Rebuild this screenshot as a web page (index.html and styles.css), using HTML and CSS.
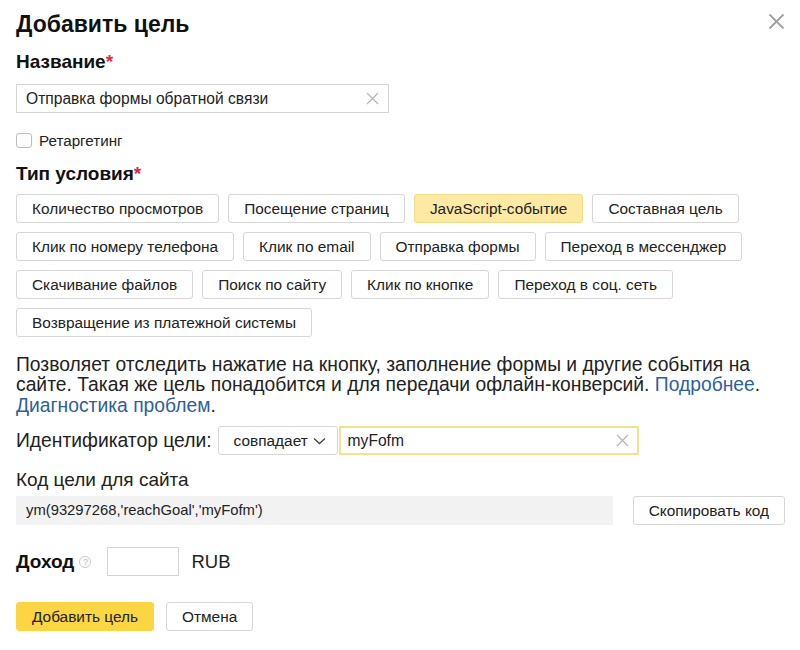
FILE: index.html
```html
<!DOCTYPE html>
<html lang="ru">
<head>
<meta charset="utf-8">
<title>Добавить цель</title>
<link rel="stylesheet" href="styles.css">
</head>
<body>
<div class="dialog">
  <div class="head">
    <h1 class="title">Добавить цель</h1>
    <button class="close" aria-label="Закрыть">
      <svg width="17" height="17" viewBox="0 0 17 17"><path d="M1.5 1.5L15.5 15.5M15.5 1.5L1.5 15.5" stroke="#a0a0a0" stroke-width="1.8" fill="none"/></svg>
    </button>
  </div>

  <h2 class="label name-label">Название<span class="req">*</span></h2>
  <div class="input name-input">
    <span class="input-text">Отправка формы обратной связи</span>
    <svg class="clear" width="13" height="13" viewBox="0 0 13 13"><path d="M1 1L12 12M12 1L1 12" stroke="#b5b5b5" stroke-width="1.2" fill="none"/></svg>
  </div>

  <label class="check">
    <span class="box"></span>
    <span>Ретаргетинг</span>
  </label>

  <h2 class="label type-label">Тип условия<span class="req">*</span></h2>
  <div class="types">
    <button class="tbtn">Количество просмотров</button>
    <button class="tbtn">Посещение страниц</button>
    <button class="tbtn active">JavaScript-событие</button>
    <button class="tbtn">Составная цель</button>
    <button class="tbtn">Клик по номеру телефона</button>
    <button class="tbtn">Клик по email</button>
    <button class="tbtn">Отправка формы</button>
    <button class="tbtn">Переход в мессенджер</button>
    <button class="tbtn">Скачивание файлов</button>
    <button class="tbtn">Поиск по сайту</button>
    <button class="tbtn">Клик по кнопке</button>
    <button class="tbtn">Переход в соц. сеть</button>
    <button class="tbtn">Возвращение из платежной системы</button>
  </div>

  <p class="desc">Позволяет отследить нажатие на кнопку, заполнение формы и другие события на сайте. Такая же цель понадобится и для передачи офлайн-конверсий. <a href="#">Подробнее</a>. <a href="#">Диагностика проблем</a>.</p>

  <div class="ident">
    <span class="ident-label">Идентификатор цели:</span>
    <button class="select">совпадает
      <svg width="13" height="8" viewBox="0 0 13 8"><path d="M1 1.5L6.5 6.5L12 1.5" stroke="#444" stroke-width="1.3" fill="none"/></svg>
    </button>
    <div class="input focus-input">
      <span class="input-text">myFofm</span>
      <svg class="clear" width="13" height="13" viewBox="0 0 13 13"><path d="M1 1L12 12M12 1L1 12" stroke="#b5b5b5" stroke-width="1.2" fill="none"/></svg>
    </div>
  </div>

  <div class="code-label">Код цели для сайта</div>
  <div class="code-row">
    <div class="code">ym(93297268,'reachGoal','myFofm')</div>
    <button class="btn copy">Скопировать код</button>
  </div>

  <div class="income">
    <span class="income-label">Доход</span>
    <span class="help">?</span>
    <div class="input small-input"></div>
    <span class="cur">RUB</span>
  </div>

  <div class="actions">
    <button class="btn primary">Добавить цель</button>
    <button class="btn">Отмена</button>
  </div>
</div>
</body>
</html>
```

FILE: styles.css
```css
* { box-sizing: border-box; }
html, body { margin: 0; background: #fff; }
body {
  font-family: "Liberation Sans", Arial, sans-serif;
  color: #222;
  padding: 0 15px 0 16px;
}
button { font-family: inherit; }
.dialog { width: 769px; }
.head {
  display: flex;
  justify-content: space-between;
  align-items: flex-start;
  height: 38px;
}
.title {
  margin: 0;
  padding-top: 10px;
  font-size: 23px;
  line-height: 28px;
  font-weight: bold;
  color: #111;
}
.close {
  border: 0;
  background: none;
  padding: 0;
  margin: 13px 0 0 0;
  width: 17px;
  height: 17px;
}
.label {
  margin: 0;
  font-size: 19px;
  line-height: 22px;
  font-weight: bold;
  color: #111;
}
.name-label { margin-top: 13px; }
.req { color: #e0283e; }
.input {
  display: flex;
  align-items: center;
  justify-content: space-between;
  height: 29px;
  border: 1px solid #d4d4d4;
  padding: 0 9px 0 9px;
  font-size: 15.6px;
  color: #222;
  background: #fff;
}
.name-input { width: 373px; margin-top: 11px; }
.check {
  display: flex;
  align-items: center;
  gap: 7px;
  height: 18px;
  margin-top: 18px;
  font-size: 15.2px;
  color: #222;
}
.box {
  width: 16px;
  height: 15px;
  border: 1px solid #bdbdbd;
  border-radius: 3px;
  background: #fff;
}
.type-label { margin-top: 14px; }
.types {
  display: flex;
  flex-wrap: wrap;
  gap: 9px;
  margin-top: 9px;
}
.tbtn, .btn {
  height: 29px;
  border: 1px solid #d6d6d6;
  border-radius: 3px;
  background: #fff;
  color: #222;
  font-size: 15.4px;
  padding: 0 15px;
  line-height: 27px;
  white-space: nowrap;
}
.tbtn.active {
  background: #fde9a4;
  border-color: #f1dc8c;
}
.desc {
  margin: 18px 0 0;
  font-size: 19.3px;
  line-height: 20.4px;
  color: #222;
}
.desc a { color: #2e5f9e; text-decoration: none; }
.ident {
  display: flex;
  align-items: center;
  margin-top: 10px;
}
.ident-label {
  font-size: 19.3px;
  margin-right: 6px;
}
.select {
  display: flex;
  align-items: center;
  gap: 5px;
  height: 29px;
  width: 120px;
  border: 1px solid #d6d6d6;
  border-radius: 3px;
  background: #fff;
  font-size: 15.4px;
  color: #222;
  padding: 0 10px 0 15px;
  margin-right: 1px;
}
.focus-input {
  width: 300px;
  border: 2px solid #f5e28f;
  padding: 0 8px 0 7px;
}
.code-label {
  margin-top: 15px;
  font-size: 19px;
  line-height: 20px;
}
.code-row {
  display: flex;
  align-items: center;
  justify-content: space-between;
  margin-top: 6px;
}
.code {
  width: 597px;
  height: 29px;
  background: #f2f2f2;
  font-size: 14.8px;
  line-height: 29px;
  padding-left: 10px;
  color: #222;
}
.copy { padding: 0 15px; }
.income {
  display: flex;
  align-items: center;
  margin-top: 22px;
}
.income-label {
  font-size: 19px;
  font-weight: bold;
  color: #111;
}
.help {
  display: inline-flex;
  align-items: center;
  justify-content: center;
  width: 12px;
  height: 12px;
  border: 1px solid #cacaca;
  border-radius: 50%;
  font-size: 9px;
  color: #b5b5b5;
  margin-left: 5px;
}
.small-input { width: 72px; margin-left: 16px; }
.cur { font-size: 18.5px; margin-left: 12px; }
.actions {
  display: flex;
  gap: 12px;
  margin-top: 26px;
}
.primary {
  background: #fcd542;
  border-color: #fcd542;
}
```
